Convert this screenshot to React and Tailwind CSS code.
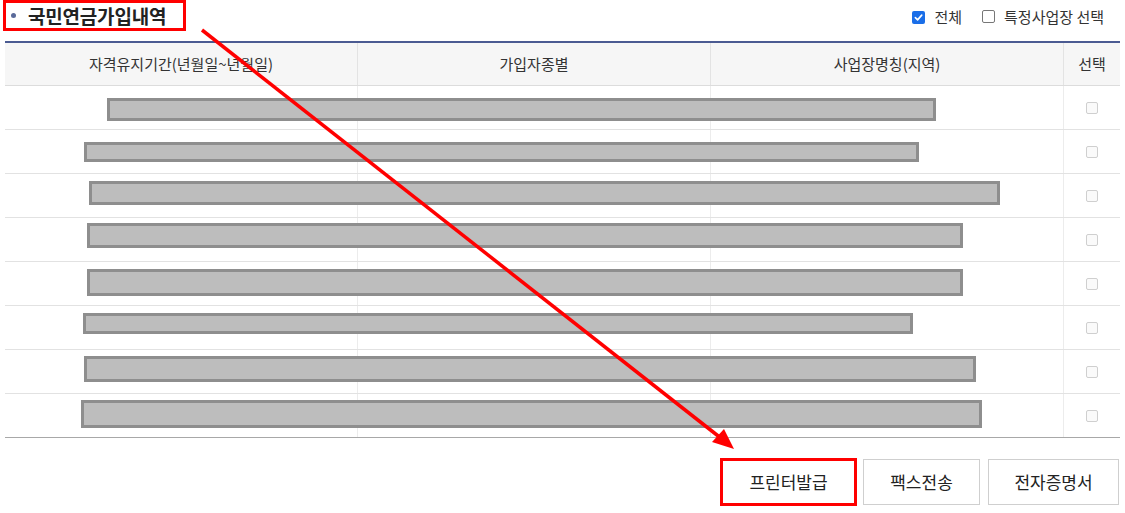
import React from "react";

const bars = [
  [107, 98, 936, 121],
  [84, 142, 919, 162],
  [89, 181, 1000, 205],
  [87, 223, 963, 248],
  [87, 269, 963, 296],
  [83, 313, 913, 334],
  [84, 356, 976, 382],
  [81, 400, 982, 428],
];

function Box({ checked }) {
  if (checked) {
    return (
      <span className="inline-flex w-[13px] h-[13px] rounded-[2px] bg-[#1a6ee8] items-center justify-center">
        <svg width="9" height="9" viewBox="0 0 10 10">
          <path d="M1.5 5.2 L4 7.6 L8.6 2.4" stroke="#fff" strokeWidth="1.8" fill="none" strokeLinecap="round" strokeLinejoin="round" />
        </svg>
      </span>
    );
  }
  return <span className="inline-block w-[13px] h-[13px] rounded-[2px] border border-[#777] bg-white" />;
}

export default function App() {
  const rows = Array.from({ length: 8 });
  return (
    <div
      className="relative w-[1125px] h-[513px] bg-white overflow-hidden text-[#222]"
      style={{ fontFamily: '"Noto Sans CJK KR", "Noto Sans", sans-serif' }}
    >
      <div className="px-[5px] pr-[5px]">
        <div className="flex items-start justify-between h-[41px]">
          <div className="flex items-center h-[31px] w-[183px] -ml-[2px] border-[3px] border-[#f00] pl-[5px]">
            <span className="w-[5px] h-[5px] rounded-full bg-[#5a6a9a] mr-[12px]" />
            <span className="text-[19px] font-bold leading-none tracking-[-0.2px]">국민연금가입내역</span>
          </div>
          <div className="flex items-center pt-[6px] pr-[16px] text-[15px] text-[#333]">
            <Box checked />
            <span className="ml-[9px]">전체</span>
            <span className="ml-[20px]"><Box /></span>
            <span className="ml-[9px]">특정사업장 선택</span>
          </div>
        </div>
        <div className="border-t-2 border-[#4b5b92] w-[1115px]">
          <div className="grid grid-cols-[353px_353px_353px_56px] h-[43px] bg-[#f6f6f6] border-b border-[#dcdcdc] text-[15px] text-[#333]">
            <div className="flex items-center justify-center border-r border-[#e3e3e3]">자격유지기간(년월일~년월일)</div>
            <div className="flex items-center justify-center border-r border-[#e3e3e3]">가입자종별</div>
            <div className="flex items-center justify-center border-r border-[#e3e3e3]">사업장명칭(지역)</div>
            <div className="flex items-center justify-center">선택</div>
          </div>
          {rows.map((_, i) => (
            <div
              key={i}
              className={`grid grid-cols-[353px_353px_353px_56px] h-[44px] border-b ${i === 7 ? "border-[#a8a8a8]" : "border-[#e2e2e2]"}`}
            >
              <div className="border-r border-[#ececec]" />
              <div className="border-r border-[#ececec]" />
              <div className="border-r border-[#ececec]" />
              <div className="flex items-center justify-center">
                <span className="inline-block w-[12px] h-[12px] rounded-[2px] border border-[#cfcfcf] bg-[#fafafa]" />
              </div>
            </div>
          ))}
        </div>
        <div className="flex justify-end items-center mt-[20px] pr-[1px]">
          <button className="w-[137px] h-[48px] border-[3px] border-[#f00] bg-white text-[17px] text-[#222]">프린터발급</button>
          <button className="ml-[6px] w-[117px] h-[46px] border border-[#cfcfcf] bg-white text-[17px] text-[#222]">팩스전송</button>
          <button className="ml-[8px] w-[131px] h-[46px] border border-[#cfcfcf] bg-white text-[17px] text-[#222]">전자증명서</button>
        </div>
      </div>

      {bars.map(([x1, y1, x2, y2], i) => (
        <div
          key={i}
          className="absolute bg-[#bdbdbd] border-[3px] border-[#8e8e8e]"
          style={{ left: x1, top: y1, width: x2 - x1, height: y2 - y1 }}
        />
      ))}

      <svg className="absolute left-0 top-0 pointer-events-none" width="1125" height="513">
        <line x1="202" y1="30" x2="722" y2="439" stroke="#f00" strokeWidth="3.5" />
        <polygon points="734,449 712,442 724,429" fill="#f00" />
      </svg>
    </div>
  );
}
